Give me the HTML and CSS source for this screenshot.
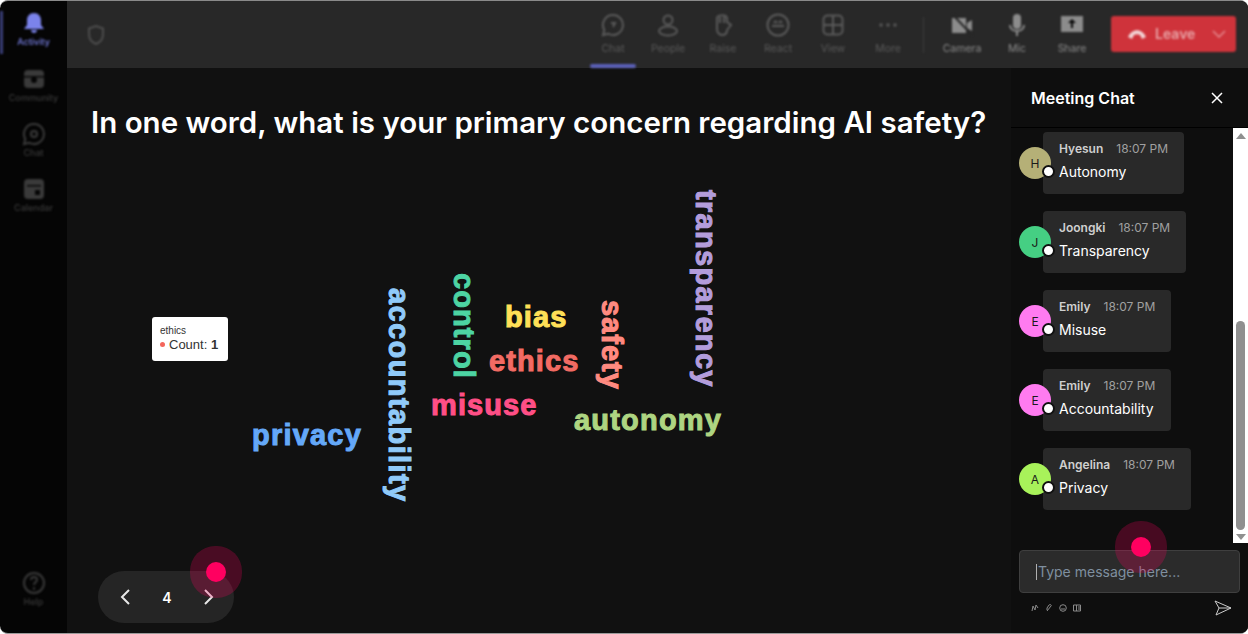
FILE: index.html
```html
<!DOCTYPE html>
<html lang="en">
<head>
  <meta charset="UTF-8">
  <meta name="viewport" content="width=device-width, initial-scale=1">
  <title>Meeting</title>
  <link rel="stylesheet" href="styles.css">
</head>
<body>

<div class="window">
  <nav class="sidebar">
    <div class="side-items">
      <a class="side-item active">
        <svg width="24" height="24" viewBox="0 0 24 24"><path class="fill" d="M12 2c4.500 0 7 3.500 7 7v5l3 4H2l3-4V9c0-3.500 2.500-7 7-7z"/><path class="fill" d="M9 19h6c0 2-1.500 3-3 3s-3-1-3-3z"/></svg>
        <span>Activity</span>
      </a>
      <a class="side-item">
        <svg width="24" height="24" viewBox="0 0 24 24"><rect class="fill" x="2" y="3" width="20" height="18" rx="4"/><circle class="hole" cx="12" cy="13" r="3"/><path class="hole" d="M2 9h20v1.500H2z"/></svg>
        <span>Community</span>
      </a>
      <a class="side-item">
        <svg width="24" height="24" viewBox="0 0 24 24"><path class="line" d="M12 2a10 10 0 1 1-5 18.700L2 22l1.300-5A10 10 0 0 1 12 2z"/><circle class="line" cx="12" cy="12" r="3"/></svg>
        <span>Chat</span>
      </a>
      <a class="side-item">
        <svg width="24" height="24" viewBox="0 0 24 24"><rect class="fill" x="2" y="2" width="20" height="20" rx="4"/><path class="hole" d="M5 8h14v1.500H5zM13 13h5v5h-5z"/></svg>
        <span>Calendar</span>
      </a>
    </div>
    <a class="side-item">
      <svg width="24" height="24" viewBox="0 0 24 24"><circle class="line" cx="12" cy="12" r="10"/><path class="line" d="M9 9c0-4 6-4 6 0 0 2-3 2-3 5"/><circle class="fill" cx="12" cy="17.500" r="1.200"/></svg>
      <span>Help</span>
    </a>
  </nav>

  <div class="content">
    <header class="topbar">
      <svg class="shield" width="20" height="22" viewBox="0 0 20 22"><path class="line" d="M10 2l7 2.500v6c0 5-3.500 8-7 9.500-3.500-1.500-7-4.500-7-9.500v-6z"/></svg>
      <div class="tools">
        <a class="tool current">
          <svg width="24" height="24" viewBox="0 0 24 24"><path class="line" d="M12 2a10 10 0 1 1-5 18.700L2 22l1.300-5A10 10 0 0 1 12 2z"/><path class="line" d="M10 10h4l-2 4"/></svg>
          <span>Chat</span>
        </a>
        <a class="tool">
          <svg width="24" height="24" viewBox="0 0 24 24"><circle class="line" cx="12" cy="7" r="4.500"/><ellipse class="line" cx="12" cy="18" rx="9" ry="4.500"/></svg>
          <span>People</span>
        </a>
        <a class="tool">
          <svg width="24" height="24" viewBox="0 0 24 24"><path class="line" d="M6 10V5c0-3 9-4 10 0v4l4 3-4 5c0 3-2 5-5 5s-5-3-5-6z"/><path class="line" d="M9 4v6M13 4v6"/></svg>
          <span>Raise</span>
        </a>
        <a class="tool">
          <svg width="24" height="24" viewBox="0 0 24 24"><circle class="line" cx="12" cy="12" r="10.500"/><path class="line" d="M6 13h12M8 10c1-2 2-2 3 0M13 10c1-2 2-2 3 0"/></svg>
          <span>React</span>
        </a>
        <a class="tool">
          <svg width="24" height="24" viewBox="0 0 24 24"><rect class="line" x="2.500" y="2.500" width="19" height="19" rx="4"/><path class="line" d="M12 3v18M3 12h18"/></svg>
          <span>View</span>
        </a>
        <a class="tool">
          <svg width="24" height="24" viewBox="0 0 24 24"><circle class="fill" cx="5" cy="12" r="1.700"/><circle class="fill" cx="12" cy="12" r="1.700"/><circle class="fill" cx="19" cy="12" r="1.700"/></svg>
          <span>More</span>
        </a>
        <div class="tool-sep"></div>
        <a class="tool device">
          <svg width="24" height="24" viewBox="0 0 24 24"><path class="fill" d="M2 5h14v15H2zM17 10l5-3v11l-5-3z"/><path class="cut" d="M3 2l19 20"/></svg>
          <span>Camera</span>
        </a>
        <a class="tool device">
          <svg width="24" height="24" viewBox="0 0 24 24"><rect class="fill" x="8" y="1" width="8" height="15" rx="4"/><path class="line" d="M5 12c0 8 14 8 14 0M12 18v5"/></svg>
          <span>Mic</span>
        </a>
        <a class="tool device">
          <svg width="24" height="24" viewBox="0 0 24 24"><path class="fill" d="M1 3h22v16H1z"/><path class="hole" d="M12 6l4 4h-3v5h-2v-5H8z"/></svg>
          <span>Share</span>
        </a>
      </div>
      <div class="leave">
        <svg width="20" height="12" viewBox="0 0 20 12"><path d="M1 9c4-9 14-9 18 0l-4 2-2-4c-2-1-4-1-6 0l-2 4z"/></svg>
        <span>Leave</span>
        <svg class="leave-arrow" width="14" height="8" viewBox="0 0 14 8"><path d="M1 1l6 6 6-6"/></svg>
      </div>
    </header>

    <div class="body">
      <main class="stage">
        <h1>In one word, what is your primary concern regarding AI safety?</h1>

        <div class="word w-transparency">transparency</div>
        <div class="word w-accountability">accountability</div>
        <div class="word w-control">control</div>
        <div class="word w-safety">safety</div>
        <div class="word w-bias">bias</div>
        <div class="word w-ethics">ethics</div>
        <div class="word w-misuse">misuse</div>
        <div class="word w-autonomy">autonomy</div>
        <div class="word w-privacy">privacy</div>

        <div class="tooltip">
          <div class="tip-name">ethics</div>
          <div class="tip-row"><i class="tip-dot"></i>Count: <b>1</b></div>
        </div>

        <div class="pager">
          <svg width="14" height="20" viewBox="0 0 14 20"><path d="M11 3l-7 7 7 7"/></svg>
          <span>4</span>
          <svg width="14" height="20" viewBox="0 0 14 20"><path d="M3 3l7 7-7 7"/></svg>
        </div>
        <div class="pointer pointer-stage"></div>
      </main>

      <aside class="chat">
        <div class="chat-head">
          <h2>Meeting Chat</h2>
          <svg width="12" height="12" viewBox="0 0 12 12"><path d="M1 1l10 10M11 1L1 11"/></svg>
        </div>

        <div class="chat-scroll">
          <div class="messages">
            <div class="msg">
              <div class="avatar av-h">H<i></i></div>
              <div class="bubble">
                <div class="meta"><b>Hyesun</b><span>18:07 PM</span></div>
                <p>Autonomy</p>
              </div>
            </div>
            <div class="msg">
              <div class="avatar av-j">J<i></i></div>
              <div class="bubble">
                <div class="meta"><b>Joongki</b><span>18:07 PM</span></div>
                <p>Transparency</p>
              </div>
            </div>
            <div class="msg">
              <div class="avatar av-e">E<i></i></div>
              <div class="bubble">
                <div class="meta"><b>Emily</b><span>18:07 PM</span></div>
                <p>Misuse</p>
              </div>
            </div>
            <div class="msg">
              <div class="avatar av-e">E<i></i></div>
              <div class="bubble">
                <div class="meta"><b>Emily</b><span>18:07 PM</span></div>
                <p>Accountability</p>
              </div>
            </div>
            <div class="msg">
              <div class="avatar av-a">A<i></i></div>
              <div class="bubble">
                <div class="meta"><b>Angelina</b><span>18:07 PM</span></div>
                <p>Privacy</p>
              </div>
            </div>
          </div>
          <div class="scrollbar">
            <svg width="10" height="6" viewBox="0 0 10 6"><path d="M5 0l5 6H0z"/></svg>
            <div class="track"><div class="thumb"></div></div>
            <svg width="10" height="6" viewBox="0 0 10 6"><path d="M5 6L0 0h10z"/></svg>
          </div>
        </div>

        <div class="compose">
          <div class="input"><i class="caret"></i>Type message here...</div>
          <div class="compose-tools">
            <div class="mini-icons">
              <svg width="8" height="8" viewBox="0 0 8 8"><path d="M1 7l1-5 2 4 1-5 2 3"/></svg>
              <svg width="8" height="8" viewBox="0 0 8 8"><path d="M2 7l4-5c1-1-1-2-2-1L2 4v2"/></svg>
              <svg width="8" height="8" viewBox="0 0 8 8"><circle cx="4" cy="4" r="3.300"/><path d="M2 5h4"/></svg>
              <svg width="8" height="8" viewBox="0 0 8 8"><path d="M0.500 1h7v6h-7zM3.500 1v6M5 3h2M5 5h2"/></svg>
            </div>
            <svg class="send" width="18" height="16" viewBox="0 0 18 16"><path d="M1 1l16 7-15 7 3-7zM5 8h12"/></svg>
          </div>
        </div>
        <div class="pointer pointer-chat"></div>
      </aside>
    </div>
  </div>
</div>

</body>
</html>
```

FILE: styles.css
```css
*, *::before, *::after {
  box-sizing: border-box;
}

html, body {
  margin: 0;
  height: 100%;
  background: #ffffff;
  overflow: hidden;
}

body {
  font-family: Inter, "Liberation Sans", sans-serif;
  color: #ffffff;
}

.window {
  display: flex;
  height: 634px;
  background: #050505;
  border-radius: 8px;
  overflow: hidden;
  border-top: 1px solid #8a8a8a;
  border-bottom: 1px solid #9a9a9a;
}

svg .fill { fill: currentColor; }
svg .line { fill: none; stroke: currentColor; stroke-width: 2; }
svg .hole { fill: #050505; }
svg .cut { fill: none; stroke: #282828; stroke-width: 2; }

/* left rail, blurred in the reference */
.sidebar {
  width: 67px;
  flex: none;
  display: flex;
  flex-direction: column;
  justify-content: space-between;
  padding: 10px 0 20px;
  color: #3a3a3a;
  filter: blur(1px);
  position: relative;
}

.side-items {
  display: flex;
  flex-direction: column;
  gap: 13px;
}

.side-item {
  display: flex;
  flex-direction: column;
  align-items: center;
  gap: 1px;
  height: 42px;
  font-size: 9px;
  font-weight: 500;
}

.side-item.active {
  color: #7b83eb;
  border-left: 3px solid #3a3f78;
  height: 43px;
  padding-right: 3px;
}

.content {
  flex: 1;
  min-width: 0;
  display: flex;
  flex-direction: column;
  background: #111111;
  border-top-left-radius: 6px;
}

.topbar {
  height: 67px;
  flex: none;
  display: flex;
  align-items: center;
  background: #282828;
  padding: 0 12px 0 19px;
  color: #4d4d4d;
}

.shield {
  filter: blur(1px);
}

.tools {
  margin-left: auto;
  display: flex;
  align-items: flex-start;
  height: 67px;
  filter: blur(1.1px);
}

.tool {
  position: relative;
  width: 46px;
  margin-right: 9px;
  display: flex;
  flex-direction: column;
  align-items: center;
  padding-top: 12px;
  gap: 5px;
  font-size: 10.500px;
  color: #5a5a5a;
}

.tool.current::after {
  content: "";
  position: absolute;
  left: 0;
  right: 0;
  bottom: -2px;
  height: 4px;
  border-radius: 2px;
  background: #5b60b8;
}

.tool.current {
  height: 65px;
}

.tool-sep {
  width: 1px;
  height: 36px;
  margin: 16px 15px 0 3px;
  background: #3e3e3e;
}

.tool.device {
  color: #8c8c8c;
  margin-right: 9px;
}

.tool.device + .tool.device {
  margin-left: 0;
}

.leave {
  margin-left: 7px;
  width: 125px;
  height: 36px;
  margin-bottom: 2px;
  display: flex;
  align-items: center;
  padding: 0 10px 0 16px;
  gap: 8px;
  background: #cf333b;
  border-radius: 3px;
  font-size: 14px;
  font-weight: 600;
  color: #e8a5a8;
  filter: blur(0.9px);
}

.leave svg path {
  fill: #f2d5d6;
}

.leave .leave-arrow {
  margin-left: auto;
}

.leave .leave-arrow path {
  fill: none;
  stroke: #e58b90;
  stroke-width: 1.500;
}

.body {
  flex: 1;
  min-height: 0;
  display: flex;
}

/* stage holds the word cloud, words are placed freely on it */
.stage {
  position: relative;
  flex: 1;
  min-width: 0;
}

.stage h1 {
  margin: 0;
  padding: 36px 0 0 24px;
  font-size: 29.500px;
  line-height: 36px;
  font-weight: 600;
  white-space: nowrap;
}

.word {
  position: absolute;
  font-family: "Liberation Sans", Arial, sans-serif;
  font-weight: 700;
  line-height: 1;
  white-space: nowrap;
  -webkit-text-stroke: 1px currentColor;
}

.word.w-transparency,
.word.w-accountability,
.word.w-control,
.word.w-safety {
  writing-mode: vertical-rl;
}

.w-transparency { left: 624px; top: 122px; font-size: 29px; color: #b39ddb; letter-spacing: 1.300px; }
.w-accountability { left: 317px; top: 220px; font-size: 29px; color: #90caf9; letter-spacing: 1.400px; }
.w-control { left: 382px; top: 205px; font-size: 29px; color: #4dd4a3; letter-spacing: 1.100px; }
.w-safety { left: 530px; top: 232px; font-size: 29px; color: #ff8a80; letter-spacing: 1px; }
.w-bias { left: 438px; top: 235px; font-size: 29px; color: #ffe057; letter-spacing: 1.100px; }
.w-ethics { left: 422px; top: 279px; font-size: 29px; color: #f26b63; letter-spacing: 1.100px; }
.w-misuse { left: 364px; top: 323px; font-size: 29px; color: #ff4f86; letter-spacing: 1.100px; }
.w-autonomy { left: 507px; top: 338px; font-size: 29px; color: #aed581; letter-spacing: 1.200px; }
.w-privacy { left: 185px; top: 353px; font-size: 29px; color: #64a8f8; letter-spacing: 1.200px; }

.tooltip {
  position: absolute;
  left: 85px;
  top: 249px;
  width: 76px;
  height: 44px;
  padding: 8px 8px;
  background: #ffffff;
  border-radius: 3px;
  color: #333333;
  font-family: "Liberation Sans", Arial, sans-serif;
  font-size: 10px;
  line-height: 12px;
}

.tip-row {
  display: flex;
  align-items: center;
  font-size: 13px;
  line-height: 15px;
  white-space: pre;
}

.tip-row b {
  font-weight: 700;
}

.tip-dot {
  width: 5px;
  height: 5px;
  margin-right: 4px;
  border-radius: 50%;
  background: #f4665c;
}

.pager {
  position: absolute;
  left: 31px;
  bottom: 10px;
  width: 136px;
  height: 52px;
  display: flex;
  align-items: center;
  justify-content: space-between;
  padding: 0 18px 0 20px;
  border-radius: 26px;
  background: #252525;
  font-size: 14px;
  font-weight: 600;
}

.pager svg path {
  fill: none;
  stroke: #e8e8e8;
  stroke-width: 2;
}

.pointer {
  position: absolute;
  width: 20px;
  height: 20px;
  border-radius: 50%;
  background: #ff0060;
  box-shadow: 0 0 0 16px rgba(255, 0, 96, 0.24);
}

.pointer-stage {
  left: 139px;
  top: 494px;
}

.pointer-chat {
  left: 120px;
  top: 469px;
}

.chat {
  position: relative;
  width: 237px;
  flex: none;
  display: flex;
  flex-direction: column;
  background: #0e0e0e;
}

.chat-head {
  height: 60px;
  flex: none;
  display: flex;
  align-items: center;
  justify-content: space-between;
  padding: 0 25px 0 20px;
  border-bottom: 1px solid #000000;
}

.chat-head h2 {
  margin: 0;
  font-size: 16px;
  font-weight: 600;
}

.chat-head svg path {
  fill: none;
  stroke: #ffffff;
  stroke-width: 1.500;
}

.chat-scroll {
  height: 415px;
  flex: none;
  display: flex;
}

.messages {
  flex: 1;
  min-width: 0;
  padding: 4px 0 0 8px;
  display: flex;
  flex-direction: column;
  gap: 17px;
}

.msg {
  display: flex;
  align-items: center;
}

.avatar {
  position: relative;
  z-index: 1;
  width: 32px;
  height: 32px;
  flex: none;
  margin-right: -8px;
  display: flex;
  align-items: center;
  justify-content: center;
  border-radius: 50%;
  color: #1a1a1a;
  font-size: 12px;
}

.avatar i {
  position: absolute;
  right: -4px;
  bottom: 1px;
  width: 13px;
  height: 13px;
  border-radius: 50%;
  background: #ffffff;
  border: 2px solid #111111;
}

.av-h { background: #b5b077; }
.av-j { background: #45cf83; }
.av-e { background: #ff7bf0; }
.av-a { background: #a8f25a; }

.bubble {
  height: 62px;
  padding: 9px 16px 0;
  background: #292929;
  border-radius: 4px;
}

.meta {
  display: flex;
  gap: 13px;
  font-size: 12px;
  line-height: 16px;
  white-space: nowrap;
}

.meta b {
  font-weight: 600;
  color: #cfcfcf;
}

.meta span {
  color: #a0a0a0;
}

.bubble p {
  margin: 6px 0 0;
  font-size: 14px;
  line-height: 18px;
  white-space: nowrap;
}

.scrollbar {
  width: 15px;
  flex: none;
  display: flex;
  flex-direction: column;
  align-items: center;
  background: #ffffff;
  padding: 5px 0 3px;
}

.scrollbar svg path {
  fill: #8f8f8f;
}

.track {
  flex: 1;
  width: 9px;
  display: flex;
  align-items: flex-end;
  padding-bottom: 4px;
}

.thumb {
  width: 100%;
  height: 209px;
  border-radius: 5px;
  background: #8f8f8f;
}

.compose {
  flex: 1;
  padding: 7px 8px 0;
}

.input {
  height: 43px;
  display: flex;
  align-items: center;
  padding-left: 16px;
  background: #2b2b2b;
  border: 1px solid #3f3f3f;
  border-radius: 4px;
  color: #7f8f9f;
  font-size: 14px;
}

.caret {
  width: 1px;
  height: 16px;
  margin-right: 1px;
  background: #b0b0b0;
}

.compose-tools {
  display: flex;
  align-items: center;
  justify-content: space-between;
  padding: 7px 8px 0 12px;
}

.mini-icons {
  display: flex;
  gap: 6px;
}

.mini-icons svg path,
.mini-icons svg circle {
  fill: none;
  stroke: #8a8a8a;
  stroke-width: 1;
}

.send path {
  fill: none;
  stroke: #cccccc;
  stroke-width: 1;
}
```
